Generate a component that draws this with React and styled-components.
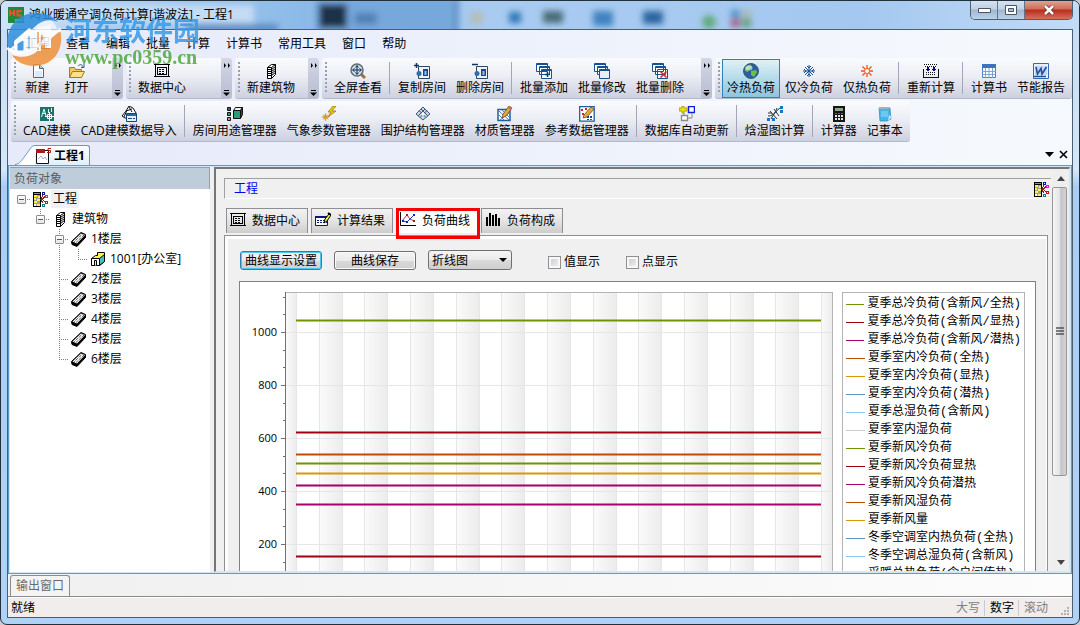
import React, { useState } from "react";
import styled, { createGlobalStyle, css } from "styled-components";

const GlobalStyle = createGlobalStyle`
  * {
    box-sizing: border-box;
  }
  body {
    margin: 0;
    background: #c9cdd2;
    color: #000;
    font-family: "Open Sans", "Noto Sans CJK SC", sans-serif;
    font-size: 12px;
    line-height: 16px;
  }
  button,
  select,
  input {
    font: inherit;
    color: inherit;
    margin: 0;
  }
  svg {
    display: block;
    flex: none;
  }
`;

const icons = {
  newFile: (
    <>
      <path d="M3.500 1.500h6l4 4v9h-10z" fill="#fff" stroke="#4f6a88" />
      <path d="M5 8h7v6H5z" fill="#dbe8f8" />
      <path d="M9.500 1.500v4h4" fill="#b7cde4" stroke="#4f6a88" />
    </>
  ),
  open: (
    <>
      <path d="M.5 14.500v-10h5l1 2h6v3" fill="#f3c85a" stroke="#a8781a" />
      <path d="M.5 14.500l3-6h12l-3 6z" fill="#ffe08a" stroke="#a8781a" />
      <path d="M9 3c2-2 4-2 5 1M12 4.500h3V1" fill="none" stroke="#3b5c8c" />
    </>
  ),
  table: (
    <g shapeRendering="crispEdges">
      <path d="M0 1h16v1H0zM0 13h16v1H0zM1 2h1v11H1zM14 2h1v11h-1zM3 4h10v1H3zM3 11h10v1H3zM3 4h1v8H3zM12 4h1v8h-1z" fill="#000" />
      <path d="M5 6h6M5 8h6M5 10h6" stroke="#000" strokeDasharray="2 1" transform="translate(0 .5)" />
    </g>
  ),
  building: (
    <>
      <path d="M4.500 4.500l4-3h4v10l-4 4h-4z" fill="#fff" stroke="#000" />
      <path d="M8.500 4.500l4-3M8.500 4.500v11M4.500 4.500h4" stroke="#000" fill="none" />
      <path d="M4 6.500h4.500l4-3M4 8.500h4.500l4-3M4 10.500h4.500l4-3M4 12.500h4.500l4-3" stroke="#000" fill="none" />
    </>
  ),
  zoomAll: (
    <>
      <path d="M11 11l4 4" stroke="#a5703c" strokeWidth="3" />
      <circle cx="7" cy="7" r="6" fill="#d4e0ec" stroke="#5d6a76" strokeWidth="1.5" />
      <path d="M7 3v8M3 7h8M5.500 4.500L7 2.500l1.500 2M5.500 9.500L7 11.500l1.500-2M4.500 5.500L2.500 7l2 1.500M9.500 5.500l2 1.500-2 1.500" stroke="#0d2c50" fill="none" />
    </>
  ),
  copyRoom: (
    <>
      <path d="M4.500 3.500h11v12h-11z" fill="#eef3f8" stroke="#2e4560" />
      <path d="M9 6h5v7H9z" fill="#16498a" />
      <path d="M10.500 8h2v4h-2z" fill="#8fc1f2" />
      <circle cx="5" cy="10.500" r="2.500" fill="#2c6dad" />
      <path d="M2.500 0v5M0 2.500h5" stroke="#16365f" strokeWidth="1.500" />
    </>
  ),
  deleteRoom: (
    <>
      <path d="M4.500 3.500h11v12h-11z" fill="#eef3f8" stroke="#2e4560" />
      <path d="M9 6h5v7H9z" fill="#16498a" />
      <path d="M10.500 8h2v4h-2z" fill="#8fc1f2" />
      <circle cx="5" cy="10.500" r="2.500" fill="#2c6dad" />
      <path d="M0 1.500h6" stroke="#16365f" strokeWidth="1.500" />
    </>
  ),
  batchAdd: (
    <>
      <path d="M.5.500h11v8H.5zM3.500 3.500h10v8h-10zM5.500 6.500h10v9h-10z" fill="#fff" stroke="#17518f" />
      <path d="M.5 1.500h11M3.500 4.500h10M5.500 7.500h10" stroke="#17518f" />
      <path d="M9 11.500h5M11.500 9v5" stroke="#0a3c78" strokeWidth="1.500" />
    </>
  ),
  batchEdit: (
    <>
      <path d="M.5.500h11v8H.5zM3.500 3.500h10v8h-10z" fill="#fff" stroke="#17518f" />
      <path d="M5.500 6.500h10v9h-10z" fill="#e5eef8" stroke="#17518f" />
      <path d="M.5 1.500h11M3.500 4.500h10M5.500 7.500h10" stroke="#17518f" />
    </>
  ),
  batchDelete: (
    <>
      <path d="M.5.500h11v8H.5zM3.500 3.500h10v8h-10zM5.500 6.500h10v9h-10z" fill="#fff" stroke="#17518f" />
      <path d="M.5 1.500h11M3.500 4.500h10" stroke="#17518f" />
      <path d="M8.500 8.500l6 6M14.500 8.500l-6 6" stroke="#d8262c" strokeWidth="1.600" />
    </>
  ),
  globe: (
    <>
      <circle cx="8" cy="8" r="7.500" fill="#2b5f9e" stroke="#3d5878" />
      <path d="M2 5c2-3 5-4 6-3l1 3-3 1-1 3-3-1zM8 8l5-1 1 2-3 5-3-2z" fill="#6cc04a" />
      <ellipse cx="6" cy="5" rx="3.500" ry="2.500" fill="#fff" opacity=".55" />
    </>
  ),
  snow: (
    <path d="M8 2v12M2 8h12M4 4l8 8M12 4l-8 8M6 3l2 2 2-2M6 13l2-2 2 2M3 6l2 2-2 2M13 6l-2 2 2 2" stroke="#174f96" fill="none" />
  ),
  sun: (
    <>
      <circle cx="8" cy="8" r="2.500" fill="#fff" stroke="#e8541a" />
      <path d="M8 2v3M8 11v3M2 8h3M11 8h3M3.500 3.500l2.500 2.500M10 10l2.500 2.500M12.500 3.500L10 6M6 10l-2.500 2.500" stroke="#e8541a" strokeWidth="1.300" />
    </>
  ),
  recalc: (
    <g shapeRendering="crispEdges">
      <path d="M1 1.500h14M3 9.500h10M3 11.500h10" stroke="#111" strokeDasharray="1 1" />
      <path d="M2 3.500h12" stroke="#111" strokeDasharray="1 1" />
      <path d="M.5 6v8.500h15V6" fill="none" stroke="#111" />
      <path d="M4 4h2v3H4zM3 6h4v1H3zM4 7h2v1H4zM10 4h2v3h-2zM9 6h4v1H9zM10 7h2v1h-2z" fill="#0a0a80" />
    </g>
  ),
  sheet: (
    <>
      <path d="M1.500 1.500h13v13h-13z" fill="#fff" stroke="#4a7cc0" />
      <path d="M1 1h14v4H1z" fill="#3c72bf" />
      <path d="M1 8.500h14M1 11.500h14M4.500 5v10M8 5v10M11.500 5v10" stroke="#7ba4d8" />
    </>
  ),
  word: (
    <>
      <path d="M.5.500h15v15H.5z" fill="#e7effa" stroke="#3868ae" />
      <path d="M2 3h12v9H2z" fill="#c3d7f0" />
      <path d="M3 4l1.500 7L8 5.500l1 5.500L13.500 4M1 13.500h12" stroke="#234f9c" strokeWidth="1.600" fill="none" />
    </>
  ),
  cad: (
    <>
      <path d="M1 1h14v14H1z" fill="#19736c" />
      <path d="M2.500 11l2.500-8 2 7M4 7.500h3M9.500 3v4M12.500 2v4" stroke="#e4f6f2" fill="none" />
      <path d="M8.500 8.500h4v4h-4zM10.500 6v9M6 10.500h9" stroke="#fff" fill="none" />
    </>
  ),
  cadImport: (
    <>
      <path d="M1 10l4-5 3-5 4 2 3 5-3 5H4z" fill="#fff" stroke="#111" />
      <path d="M3 11l3-7M5 5l6-2M8 1l3 5" stroke="#111" fill="none" />
      <path d="M5.500 7.500h10v8h-10z" fill="#e7f1fb" stroke="#15457b" />
      <path d="M6 8h9v2H6z" fill="#2569b0" />
      <path d="M7 12.500h4M12 12.500h2" stroke="#15457b" />
    </>
  ),
  roomUse: (
    <>
      <path d="M.5 1.500h3v3h-3z" fill="#2c6ac0" stroke="#111" />
      <path d="M.5 6.500h3v3h-3z" fill="#18a878" stroke="#111" />
      <path d="M.5 11.500h3v3h-3z" fill="#e08a70" stroke="#111" />
      <path d="M6.500 4.500l2-3h7l-2 3z" fill="#e5f7f2" stroke="#111" />
      <path d="M6.500 4.500h7v8h-7z" fill="#299c7d" stroke="#111" />
      <path d="M13.500 4.500l2-3v7l-2 4z" fill="#0d5848" stroke="#111" />
    </>
  ),
  weather: (
    <>
      <path d="M12 0L7 6h3l-3 5 8-6h-4l4-5z" fill="#f6c800" stroke="#8c6a00" strokeWidth=".7" />
      <circle cx="4.500" cy="11" r="2.500" fill="#e8b54a" />
      <path d="M4.500 7v8M.5 11h8M2 8.500l5 5M7 8.500l-5 5" stroke="#c99b3e" strokeWidth=".8" />
    </>
  ),
  structure: (
    <>
      <path d="M8 1l7 7-7 6-7-6z" fill="#c4d8ec" stroke="#475a6e" />
      <path d="M4 4.500l7 7M6 3l7 7M12 4.500l-7 7M10 3L3 10" stroke="#475a6e" />
      <path d="M8 6l2 2-2 2-2-2z" fill="#fff" />
    </>
  ),
  material: (
    <>
      <path d="M1 3.500h12v11H1z" fill="#fff" stroke="#1f5e9f" strokeWidth="1.500" />
      <path d="M2 5l10 9M12 7l-9 7M5 4l7 7M2 9l5 5" stroke="#4b82b8" />
      <path d="M5 12l1-4 6-8 3 2-6 8z" fill="#e3a93b" stroke="#6d4a12" strokeWidth=".8" />
      <path d="M12 0l3 2-1 2-3-2z" fill="#c66" />
    </>
  ),
  reference: (
    <>
      <path d="M.7.700h14.500v14.500H.7z" fill="#fff" stroke="#1f5e9f" strokeWidth="1.300" />
      <path d="M2 3h2v2H2zM6 2h2v2H6zM3 7h2v2H3z" fill="#e02020" />
      <path d="M8 10h2v2H8zM11 10h2v2h-2zM8 13h2v1H8z" fill="#1a3aa0" />
      <path d="M11 13h2v1h-2z" fill="#188030" />
      <path d="M4 12l1-3 7-8 3 2-7 8z" fill="#e3a93b" stroke="#6d4a12" strokeWidth=".8" />
    </>
  ),
  dbUpdate: (
    <>
      <path d="M9.500.500h6v6h-6z" fill="#fff" stroke="#0a20e0" strokeWidth="1.500" />
      <path d="M2.500 9.500h6v5h-6z" fill="#fff" stroke="#8a8a8a" strokeWidth="1.300" />
      <path d="M13 7v5H9M5 9V7" stroke="#8a8a8a" fill="none" />
      <path d="M3 0h2v2h3v3H5v2H3V5H0V2h3z" fill="#f2e200" stroke="#8f8600" strokeWidth=".7" />
    </>
  ),
  psychro: (
    <>
      <path d="M1 10c4 0 7-2 9-8M4 13c2-4 5-8 9-11M3 5l7 8M7 3l5 7M1 7h4" stroke="#333" fill="none" />
      <path d="M13 0h3v3h-3zM13 4h3v3h-3zM0 12h3v3H0zM5 12h3v3H5z" fill="#1a75c8" />
    </>
  ),
  calculator: (
    <g shapeRendering="crispEdges">
      <path d="M2 0h12v16H2z" fill="#161616" />
      <path d="M4 2h8v3H4z" fill="#8fa888" />
      <path d="M4 7h2v1H4zM7 7h2v1H7zM10 7h2v1h-2z" fill="#e02828" />
      <path d="M4 9h2v2H4zM7 9h2v2H7zM10 9h2v2h-2zM4 12h2v2H4zM7 12h2v2H7zM10 12h2v2h-2z" fill="#e8e8e8" />
    </g>
  ),
  notepad: (
    <>
      <path d="M2 2h11l1 11-4 2H3z" fill="#47b4e6" stroke="#2d87b5" strokeWidth=".7" />
      <path d="M2 1h10v2H2z" fill="#dfeef5" />
      <path d="M3 1v2M5 1v2M7 1v2M9 1v2M11 1v2" stroke="#5c7c8c" />
      <path d="M4 5h7v6H4z" fill="#6cc8f0" />
      <path d="M12 9l3 2-4 4z" fill="#bfe4f5" />
    </>
  ),
  project: (
    <g shapeRendering="crispEdges">
      <path d="M0 1h8v15H0z" fill="#000" />
      <path d="M1 2h6v1H1z" fill="#18d838" />
      <path d="M1 4h6v11H1z" fill="#a0a0a0" />
      <path d="M1 4h3v2H1zM5 5h2v2H5zM1 7h2v2H1zM4 8h3v2H4zM1 10h3v2H1zM4 13h3v2H4z" fill="#fff34a" />
      <path d="M1 13h2v2H1z" fill="#fff" />
      <path d="M7 8.500h2l3-3M9 8.500l3 2M8 9l2 3M8 8l2-4" stroke="#902020" fill="none" />
      <path d="M9.500 1.500h2v2h-2z" fill="#fff" stroke="#10108c" />
      <path d="M12.500 4.500h2v2h-2z" fill="#fff" stroke="#e010d8" />
      <path d="M12.500 10.500h2v2h-2z" fill="#fff" stroke="#d81010" />
      <path d="M9.500 13.500h2v2h-2z" fill="#fff" stroke="#0e8080" />
    </g>
  ),
  floor: (
    <>
      <path d="M.5 10.500L10 1.500l4.500 2v3L6 15.500l-5-2z" fill="#000" stroke="#000" />
      <path d="M1.500 10.500L10 2.500l4 1.500-8 8.500z" fill="#fff" />
      <path d="M3.500 10.500l8-7.500M5 11.500l8-7.500" stroke="#000" strokeDasharray="1 1" />
    </>
  ),
  room: (
    <>
      <path d="M1.500 7.500l4-3h2v-3h7v9l-5 4z" fill="#fff34a" stroke="#000" />
      <path d="M9.500 7.500l5-4v7l-5 4z" fill="#3fc4c8" stroke="#000" />
      <path d="M1.500 7.500h8v7h-8z" fill="#fff" stroke="#000" />
      <path d="M4.500 14.500v-5h2v5" fill="#fff34a" stroke="#000" />
    </>
  ),
  results: (
    <>
      <path d="M.5 4.500h12v9H.5z" fill="#fff" stroke="#0b1680" />
      <path d="M0 4h13v2H0z" fill="#0b1680" />
      <path d="M2 8.500h10M2 10.500h10" stroke="#0b1680" strokeDasharray="2 1" />
      <path d="M9 11l1-4 4-5 2 1-4 6z" fill="#fff34a" stroke="#000" />
      <path d="M13 1l3 2" stroke="#000" strokeWidth="2" />
    </>
  ),
  curve: (
    <>
      <path d="M.5 0v13.500H16" fill="none" stroke="#000" />
      <path d="M2 9l5-6 3 4 4 2" fill="none" stroke="#b03040" />
      <path d="M3 9l4 1 7-7" fill="none" stroke="#2038d8" />
      <path d="M2 8h2v2H2zM6 9h2v2H6zM13 2h2v2h-2z" fill="#1020c8" />
      <path d="M6 2h2v2H6zM13 8h2v2h-2z" fill="#a02020" />
    </>
  ),
  bars: (
    <path d="M1 5h2v9H1zM4 1h2v13H4zM7 3h2v11H7zM10 2h2v12h-2zM13 6h2v8h-2z" fill="#000" shapeRendering="crispEdges" />
  ),
  doc: (
    <>
      <path d="M1.500 2.500h12v13h-12z" fill="#fff" stroke="#111" />
      <path d="M1 1h9v4H1z" fill="#a51c1c" />
      <path d="M3 11l3-3 2 3 2-2 2 3" stroke="#aac" fill="none" />
      <path d="M16 .500h-3v2h2.500v2H12" stroke="#a51c1c" fill="none" />
    </>
  ),
};

const Icon = ({ name }) => (
  <svg width="16" height="16" viewBox="0 0 16 16" aria-hidden="true">
    {icons[name]}
  </svg>
);

const mainToolbar = [
  { more: true, items: [["newFile", "新建"], ["open", "打开"]], room: 16 },
  { more: true, items: [["table", "数据中心"]], room: 30 },
  { more: true, items: [["building", "新建筑物"]], room: 8 },
  {
    more: true,
    room: 12,
    items: [
      ["zoomAll", "全屏查看"],
      null,
      ["copyRoom", "复制房间"],
      ["deleteRoom", "删除房间"],
      null,
      ["batchAdd", "批量添加"],
      ["batchEdit", "批量修改"],
      ["batchDelete", "批量删除"],
    ],
  },
  {
    items: [
      ["globe", "冷热负荷"],
      ["snow", "仅冷负荷"],
      ["sun", "仅热负荷"],
      null,
      ["recalc", "重新计算"],
      null,
      ["sheet", "计算书"],
      ["word", "节能报告"],
    ],
  },
];

const toolsToolbar = [
  {
    items: [
      ["cad", "CAD建模"],
      ["cadImport", "CAD建模数据导入"],
      null,
      ["roomUse", "房间用途管理器"],
      ["weather", "气象参数管理器"],
      ["structure", "围护结构管理器"],
      ["material", "材质管理器"],
      ["reference", "参考数据管理器"],
      null,
      ["dbUpdate", "数据库自动更新"],
      null,
      ["psychro", "焓湿图计算"],
      null,
      ["calculator", "计算器"],
      ["notepad", "记事本"],
    ],
  },
];

const menus = ["工程", "查看", "编辑", "批量", "计算", "计算书", "常用工具", "窗口", "帮助"];

// cells: "box" expander, "v" line passing by, "t" branch, "l" last branch, "" blank
const tree = [
  { cells: ["box"], icon: "project", label: "工程", selected: true },
  { cells: ["", "boxUp"], icon: "building", label: "建筑物" },
  { cells: ["", "", "boxBoth"], icon: "floor", label: "1楼层" },
  { cells: ["", "", "v", "l"], icon: "room", label: "1001[办公室]" },
  { cells: ["", "", "t"], icon: "floor", label: "2楼层" },
  { cells: ["", "", "t"], icon: "floor", label: "3楼层" },
  { cells: ["", "", "t"], icon: "floor", label: "4楼层" },
  { cells: ["", "", "t"], icon: "floor", label: "5楼层" },
  { cells: ["", "", "l"], icon: "floor", label: "6楼层" },
];

const pageTabs = [
  ["table", "数据中心"],
  ["results", "计算结果"],
  ["curve", "负荷曲线"],
  ["bars", "负荷构成"],
];

const GREEN = "#6f9400";
const RED = "#a00010";
const MAGENTA = "#a80068";
const ORANGE = "#c04c00";
const AMBER = "#dc9608";
const BLUE = "#5a94c8";
const SKY = "#8cc6f4";
const GREY = "#cccccc";

const legend = [
  [GREEN, "夏季总冷负荷(含新风/全热)"],
  [RED, "夏季总冷负荷(含新风/显热)"],
  [MAGENTA, "夏季总冷负荷(含新风/潜热)"],
  [ORANGE, "夏季室内冷负荷(全热)"],
  [AMBER, "夏季室内冷负荷(显热)"],
  [BLUE, "夏季室内冷负荷(潜热)"],
  [SKY, "夏季总湿负荷(含新风)"],
  [GREY, "夏季室内湿负荷"],
  [GREEN, "夏季新风冷负荷"],
  [RED, "夏季新风冷负荷显热"],
  [MAGENTA, "夏季新风冷负荷潜热"],
  [ORANGE, "夏季新风湿负荷"],
  [AMBER, "夏季新风量"],
  [BLUE, "冬季空调室内热负荷(全热)"],
  [SKY, "冬季空调总湿负荷(含新风)"],
  [GREY, "采暖总热负荷(含户间传热)"],
];

const series = [
  [1045, GREEN],
  [623, RED],
  [540, ORANGE],
  [506, GREEN],
  [468, AMBER],
  [423, MAGENTA],
  [351, MAGENTA],
  [155, RED],
];

const PLOT = { left: 46, right: 592, top: 10, first: 56, last: 581, bottom: 310 };
const yOf = (value) => Math.round(50 + ((1000 - value) * 53) / 200);
const xOf = (hour) => Math.round(PLOT.first + (hour * (PLOT.last - PLOT.first)) / 23);

const Chart = () => {
  const hours = Array.from({ length: 24 }, (_, i) => i);
  const bands = [[PLOT.left, PLOT.first]];
  for (let h = 1; h < 23; h += 2) bands.push([xOf(h), xOf(h + 1)]);
  bands.push([PLOT.last, PLOT.right]);
  const minors = Array.from({ length: 17 }, (_, i) => 1133 - i * 66.667);

  return (
    <ChartSvg viewBox="0 0 593 330" preserveAspectRatio="xMinYMin meet" shapeRendering="crispEdges">
      <defs>
        <linearGradient id="band">
          <stop offset="0" stopColor="#fbfbfb" />
          <stop offset="1" stopColor="#ececec" />
        </linearGradient>
      </defs>
      {bands.map(([a, b]) => (
        <rect key={a} x={a} y={PLOT.top} width={b - a} height={PLOT.bottom} fill="url(#band)" />
      ))}
      {hours.map((h) => (
        <rect key={h} x={xOf(h)} y={PLOT.top} width="1" height={PLOT.bottom} fill="#e6e6e6" />
      ))}
      {[1000, 800, 600, 400, 200].map((v) => (
        <g key={v}>
          <rect x={PLOT.left} y={yOf(v)} width={PLOT.right - PLOT.left} height="1" fill="#e6e6e6" />
          <rect x={PLOT.left - 5} y={yOf(v)} width="5" height="1" fill="#707070" />
          <text x="37" y={yOf(v) + 4} textAnchor="end">
            {v}
          </text>
        </g>
      ))}
      {minors.map((v) => (
        <rect key={v} x={PLOT.left - 3} y={yOf(v)} width="3" height="1" fill="#707070" />
      ))}
      <rect x={PLOT.left} y={PLOT.top} width={PLOT.right - PLOT.left} height="1" fill="#b4b4b4" />
      <rect x={PLOT.right} y={PLOT.top} width="1" height={PLOT.bottom} fill="#b4b4b4" />
      <rect x={PLOT.left - 1} y={PLOT.top} width="1" height={PLOT.bottom} fill="#707070" />
      {series.map(([v, color]) => (
        <g key={v} fill={color}>
          <rect x={PLOT.first} y={yOf(v) - 1} width={PLOT.last - PLOT.first} height="3" opacity="0.5" />
          <rect x={PLOT.first} y={yOf(v)} width={PLOT.last - PLOT.first} height="1" />
        </g>
      ))}
    </ChartSvg>
  );
};

const Backdrop = () => (
  <BackdropSvg viewBox="0 0 1078 28" preserveAspectRatio="xMinYMin slice" aria-hidden="true">
    <defs>
      <filter id="soft" x="-20%" y="-50%" width="140%" height="200%">
        <feGaussianBlur stdDeviation="3" />
      </filter>
      <linearGradient id="glass">
        <stop offset="0" stopColor="#cfe3f8" />
        <stop offset=".1" stopColor="#a9cdf0" />
        <stop offset=".28" stopColor="#8cbae8" />
        <stop offset=".45" stopColor="#a9cbf1" />
        <stop offset=".8" stopColor="#a5c8f0" />
        <stop offset="1" stopColor="#c2dbf6" />
      </linearGradient>
    </defs>
    <rect width="1078" height="28" fill="url(#glass)" />
    <g filter="url(#soft)">
      <rect x="28" y="4" width="225" height="18" fill="#c4dcf4" />
      <rect x="185" y="23" width="92" height="8" fill="#5a8cc0" />
      <rect x="314" y="-4" width="142" height="38" fill="#76a8dc" />
      <rect x="318" y="3" width="28" height="24" fill="#1c3148" />
      <rect x="354" y="12" width="22" height="11" fill="#426e9e" opacity=".7" />
      <rect x="454" y="-4" width="3" height="38" fill="#3f74ae" />
      <circle cx="476" cy="17" r="7" fill="#b9b9a0" opacity=".7" />
      <rect x="508" y="11" width="12" height="11" fill="#2f78b8" />
      <rect x="542" y="10" width="20" height="12" fill="#4a6c78" />
      <rect x="592" y="10" width="20" height="15" fill="#3f83bf" />
      <rect x="642" y="10" width="20" height="13" fill="#2b659f" />
      <circle cx="708" cy="21" r="7" fill="#62ab7b" />
      <rect x="730" y="9" width="9" height="8" fill="#4a90c8" />
      <rect x="730" y="18" width="9" height="8" fill="#a85a7a" />
      <rect x="741" y="9" width="9" height="8" fill="#a9b8b0" />
      <rect x="741" y="18" width="9" height="8" fill="#5b9c70" />
    </g>
  </BackdropSvg>
);

const Toolbar = ({ groups, active, onPick }) => (
  <ToolbarRow>
    {groups.map((group, i) => (
      <ToolGroup key={i} role="toolbar">
        <Grip />
        {group.items.map((item, n) =>
          item ? (
            <ToolButton key={item[1]} $active={active === item[1]} onClick={() => onPick(item[1])}>
              <Icon name={item[0]} />
              {item[1]}
            </ToolButton>
          ) : (
            <ToolSeparator key={n} />
          )
        )}
        {group.more && (
          <MoreButton aria-label="更多" $room={group.room}>
            <svg width="8" height="5" viewBox="0 0 8 5">
              <path d="M1 0l2 2.500-2 2.500zM5 0l2 2.500-2 2.500z" />
            </svg>
            <svg width="7" height="6" viewBox="0 0 7 6">
              <path d="M1 0h5v1H1zM0 2.500h7L3.500 6z" />
            </svg>
          </MoreButton>
        )}
      </ToolGroup>
    ))}
  </ToolbarRow>
);

const App = () => {
  const [mode, setMode] = useState("冷热负荷");
  const [tab, setTab] = useState("负荷曲线");

  return (
    <>
      <GlobalStyle />
      <Window>
        <TitleBar>
          <Backdrop />
          <TitleText>
            <svg width="16" height="16" viewBox="0 0 16 16" aria-hidden="true">
              <path d="M0 0h16v16H0z" fill="#1d8a3c" />
              <path d="M2 3v6M6 3v6M2 6h4M14 4H9.500v4.500H14" stroke="#f0502c" strokeWidth="2" fill="none" />
              <path d="M7 13h7" stroke="#ace2a8" />
            </svg>
            鸿业暖通空调负荷计算[谐波法] - 工程1
          </TitleText>
          <WindowButtons>
            <WindowButton aria-label="最小化">
              <svg width="13" height="6" viewBox="0 0 13 6">
                <path d="M.5 1.500h12v4H.5z" fill="#fff" stroke="#4b5566" />
              </svg>
            </WindowButton>
            <WindowButton aria-label="最大化">
              <svg width="12" height="10" viewBox="0 0 12 10">
                <path d="M.5.500h11v9H.5z" fill="#fff" stroke="#4b5566" />
                <path d="M3.500 3.500h5v3h-5z" fill="#a9bfd8" stroke="#4b5566" />
              </svg>
            </WindowButton>
            <WindowButton aria-label="关闭" $close>
              <svg width="12" height="10" viewBox="0 0 12 10">
                <path d="M2 1l8 8M10 1L2 9" stroke="#5a2a2a" strokeWidth="4" />
                <path d="M2 1l8 8M10 1L2 9" stroke="#fff" strokeWidth="2.500" />
              </svg>
            </WindowButton>
          </WindowButtons>
        </TitleBar>

        <Client>
          <MenuBar>
            <Grip $menu />
            {menus.map((m) => (
              <MenuButton key={m}>{m}</MenuButton>
            ))}
          </MenuBar>
          <Toolbar groups={mainToolbar} active={mode} onPick={setMode} />
          <Toolbar groups={toolsToolbar} onPick={() => {}} />

          <DocTabs>
            <svg width="20" height="20" viewBox="0 0 20 20" aria-hidden="true">
              <path d="M0 20C5 19 6 16 10 11S16 1 20 1v19z" fill="#fff" />
              <path d="M0 19.500C5 19 6 16 10 11S16 .5 20 .5" fill="none" stroke="#5f9cc8" />
            </svg>
            <DocTab>
              <Icon name="doc" />
              工程1
            </DocTab>
            <DocActions>
              <IconButton aria-label="窗口列表">
                <svg width="9" height="5" viewBox="0 0 9 5">
                  <path d="M0 0h9L4.500 5z" />
                </svg>
              </IconButton>
              <IconButton aria-label="关闭文档">
                <svg width="9" height="9" viewBox="0 0 9 9">
                  <path d="M1 1l7 7M8 1L1 8" stroke="#000" strokeWidth="1.600" />
                </svg>
              </IconButton>
            </DocActions>
          </DocTabs>

          <Workspace>
            <SidePanel>
              <SideTitle>负荷对象</SideTitle>
              <Tree>
                {tree.map((node) => (
                  <TreeRow key={node.label}>
                    {node.cells.map((kind, i) =>
                      kind.startsWith("box") ? (
                        <TreeCell key={i} $kind={kind}>
                          <Expander aria-label="折叠" />
                        </TreeCell>
                      ) : (
                        <TreeCell key={i} $kind={kind} />
                      )
                    )}
                    <Icon name={node.icon} />
                    <TreeLabel $selected={node.selected}>{node.label}</TreeLabel>
                  </TreeRow>
                ))}
              </Tree>
            </SidePanel>

            <Main>
              <Page>
                <PageHeader>
                  工程
                  <Icon name="project" />
                </PageHeader>
                <PageTabs role="tablist">
                  {pageTabs.map(([icon, label]) => (
                    <PageTab key={label} role="tab" aria-selected={tab === label} $active={tab === label} onClick={() => setTab(label)}>
                      <Icon name={icon} />
                      {label}
                    </PageTab>
                  ))}
                </PageTabs>
                <TabPanel>
                  <Controls>
                    <PushButton $focused>曲线显示设置</PushButton>
                    <PushButton>曲线保存</PushButton>
                    <SelectBox>
                      <select aria-label="图表类型" defaultValue="line">
                        <option value="line">折线图</option>
                      </select>
                      <svg width="8" height="4" viewBox="0 0 8 4" aria-hidden="true">
                        <path d="M0 0h8L4 4z" />
                      </svg>
                    </SelectBox>
                    <Checks>
                      <CheckLabel>
                        <input type="checkbox" />
                        值显示
                      </CheckLabel>
                      <CheckLabel>
                        <input type="checkbox" />
                        点显示
                      </CheckLabel>
                    </Checks>
                  </Controls>
                  <ChartFrame>
                    <Chart />
                    <Legend>
                      {legend.map(([color, label]) => (
                        <LegendItem key={label} $color={color}>
                          {label}
                        </LegendItem>
                      ))}
                    </Legend>
                  </ChartFrame>
                </TabPanel>
              </Page>
              <ScrollBar>
                <ScrollButton aria-label="向上滚动">
                  <svg width="8" height="5" viewBox="0 0 8 5">
                    <path d="M0 5h8L4 0z" fill="#444" />
                  </svg>
                </ScrollButton>
                <ScrollTrack>
                  <ScrollThumb>
                    <svg width="8" height="9" viewBox="0 0 8 9">
                      <path d="M0 1h8M0 4h8M0 7h8" stroke="#555" strokeWidth="1.500" />
                    </svg>
                  </ScrollThumb>
                </ScrollTrack>
                <ScrollButton aria-label="向下滚动">
                  <svg width="8" height="5" viewBox="0 0 8 5">
                    <path d="M0 0h8L4 5z" fill="#444" />
                  </svg>
                </ScrollButton>
              </ScrollBar>
            </Main>
          </Workspace>

          <OutputBar>
            <OutputTab>输出窗口</OutputTab>
          </OutputBar>
          <StatusBar>
            <StatusText>就绪</StatusText>
            <StatusCell>大写</StatusCell>
            <StatusCell $on>数字</StatusCell>
            <StatusCell $last>滚动</StatusCell>
            <svg width="10" height="10" viewBox="0 0 10 10" aria-hidden="true">
              <path d="M7 1h2v2H7zM4 4h2v2H4zM7 4h2v2H7zM1 7h2v2H1zM4 7h2v2H4zM7 7h2v2H7z" fill="#b4b0ae" />
            </svg>
          </StatusBar>
        </Client>

        <Watermark>
          <svg width="58" height="58" viewBox="0 0 58 58" aria-hidden="true">
            <circle cx="29" cy="30" r="26" fill="#fff" opacity=".75" />
            <path d="M2 32C3 15 14 3 31 3c10 0 17 3 22 9-8-3-14-2-20 2L6 38c-3 2-4-3-4-6z" fill="#2f8fdc" />
            <path d="M56 24c2 18-9 32-27 32-9 0-18-4-22-11 9 3 17 2 23-2l19-17c4-3 6-6 7-2z" fill="#f09038" />
            <path d="M9 31l15-13 5 3v19h-6V27l-8 6v7H9z" fill="#fff" />
            <path d="M13 34v6h5v-9zM24 26v14" fill="#2f8fdc" stroke="#2f8fdc" />
            <path d="M30 19l16-5v24h-6V22l-4 1v18h-6z" fill="#fff" />
            <path d="M37 25v15M33 22v18" stroke="#f09038" strokeWidth="1.500" />
            <path d="M2 38c9 8 22 5 32-3 7-6 13-11 22-16" fill="none" stroke="#fff" strokeWidth="3" />
          </svg>
          <div>
            <MarkName>河东软件园</MarkName>
            <MarkSite>www.pc0359.cn</MarkSite>
          </div>
        </Watermark>
      </Window>
    </>
  );
};

const Window = styled.div`
  position: relative;
  display: flex;
  flex-direction: column;
  height: 100vh;
  padding: 0 6px 6px;
  border: 1px solid #20303c;
  border-radius: 7px;
  overflow: hidden;
  background: linear-gradient(180deg, #c6dcf4 0, #d4e6f8 170px, #a9cdf4 185px, #b0d2f6 100%);
`;

const TitleBar = styled.header`
  display: flex;
  flex: none;
  align-items: flex-start;
  justify-content: space-between;
  height: 28px;
  padding-left: 1px;
`;

const BackdropSvg = styled.svg`
  position: absolute;
  top: 0;
  left: 0;
  width: 100%;
  height: 28px;
`;

const TitleText = styled.div`
  position: relative;
  display: flex;
  align-items: center;
  gap: 5px;
  height: 28px;
`;

const WindowButtons = styled.div`
  position: relative;
  display: flex;
  border: 1px solid #4d5f75;
  border-top: 0;
  border-radius: 0 0 5px 5px;
  overflow: hidden;
`;

const WindowButton = styled.button`
  display: flex;
  align-items: center;
  justify-content: center;
  width: ${(p) => (p.$close ? 47 : 27)}px;
  height: 18px;
  padding: 0;
  border: 0;
  border-right: ${(p) => (p.$close ? "0" : "1px solid #62748a")};
  background: ${(p) =>
    p.$close
      ? "linear-gradient(#e3a193, #cf6a58 45%, #b92d1a 50%, #d4705c)"
      : "linear-gradient(#d5e2f0, #c0d1e4 45%, #9fb7d1 50%, #bdd2e8)"};
`;

const Client = styled.main`
  display: flex;
  flex: 1;
  flex-direction: column;
  min-height: 0;
  border: 1px solid #4a6070;
  background: linear-gradient(90deg, #e6eafa, #f6f9fd);
`;

const MenuBar = styled.nav`
  display: flex;
  flex: none;
  align-items: center;
  height: 28px;
  padding-left: 2px;
`;

const MenuButton = styled.button`
  padding: 0 8px;
  border: 0;
  background: none;
`;

const Grip = styled.span`
  flex: none;
  width: ${(p) => (p.$menu ? 8 : 7)}px;
  height: ${(p) => (p.$menu ? 16 : 32)}px;
  margin-top: ${(p) => (p.$menu ? 0 : 3)}px;
  background: repeating-linear-gradient(180deg, #9a9eb4 0 2px, transparent 2px 4px) 3px 0 / 2px 100% no-repeat;
`;

const ToolbarRow = styled.div`
  display: flex;
  flex: none;
  gap: 3px;
  height: 41px;
  margin-bottom: 2px;
  padding-left: 3px;
`;

const ToolGroup = styled.div`
  display: flex;
  padding-top: 1px;
  border-bottom: 1px solid #b4b8cb;
  border-radius: 3px;
  overflow: hidden;
  background: linear-gradient(#fafbfe, #eceef5 45%, #cdd0df);
  &:last-child {
    padding-right: 2px;
  }
`;

const ToolButton = styled.button`
  display: flex;
  flex: none;
  flex-direction: column;
  align-items: center;
  gap: 1px;
  min-width: 39px;
  height: 39px;
  padding: 3px 4px 0;
  border: 1px solid transparent;
  background: none;
  white-space: nowrap;
  ${(p) =>
    p.$active &&
    css`
      border-color: #2b83b4;
      background: linear-gradient(#e0f1f7, #b4dbea 50%, #8dc6de);
    `}
`;

const ToolSeparator = styled.span`
  flex: none;
  width: 1px;
  height: 32px;
  margin: 3px 3px 0 2px;
  background: #a3a6ba;
`;

const MoreButton = styled.button`
  display: flex;
  flex: none;
  flex-direction: column;
  align-items: center;
  justify-content: space-between;
  width: 11px;
  height: 41px;
  margin: -1px 0 0 ${(p) => p.$room}px;
  padding: 5px 0 3px;
  border: 0;
  background: linear-gradient(#d3d7e6, #b6bccf);
`;

const DocTabs = styled.div`
  display: flex;
  flex: none;
  align-items: flex-end;
  height: 21px;
  padding: 0 4px 0 7px;
`;

const DocTab = styled.div`
  display: flex;
  align-items: center;
  gap: 3px;
  height: 20px;
  padding: 0 4px 0 0;
  border-top: 1px solid #5f9cc8;
  border-right: 1px solid #5f9cc8;
  border-radius: 0 3px 0 0;
  background: linear-gradient(#fff, #e0effc);
  font-weight: bold;
`;

const DocActions = styled.div`
  display: flex;
  align-items: center;
  gap: 5px;
  height: 21px;
  margin-left: auto;
`;

const IconButton = styled.button`
  padding: 0;
  border: 0;
  background: none;
`;

const Workspace = styled.section`
  display: flex;
  flex: 1;
  gap: 4px;
  min-height: 0;
  border: 1px solid #5f9cc8;
  box-shadow: inset 0 0 0 1px #cfe5f8;
  padding: 1px;
  background: #f0f0f0;
`;

const SidePanel = styled.aside`
  flex: none;
  width: 200px;
  background: #fff;
`;

const SideTitle = styled.h2`
  height: 22px;
  margin: 0;
  padding-left: 4px;
  border-top: 1px solid #989ea4;
  border-right: 1px solid #989ea4;
  background: #bfcdda;
  color: #555c63;
  font-size: 12px;
  font-weight: normal;
  line-height: 22px;
`;

const Tree = styled.div`
  padding-left: 2px;
`;

const TreeRow = styled.div`
  display: flex;
  align-items: center;
  height: 20px;
`;

const dotsV = "repeating-linear-gradient(180deg, #808080 0 1px, transparent 1px 2px)";
const dotsH = "repeating-linear-gradient(90deg, #808080 0 1px, transparent 1px 2px)";
const cellLines = {
  box: `${dotsH} 9px 10px / 10px 1px no-repeat`,
  boxUp: `${dotsH} 9px 10px / 10px 1px no-repeat, ${dotsV} 9px 0 / 1px 10px no-repeat`,
  boxBoth: `${dotsH} 9px 10px / 10px 1px no-repeat, ${dotsV} 9px 0 / 1px 20px no-repeat`,
  v: `${dotsV} 9px 0 / 1px 20px no-repeat`,
  t: `${dotsH} 9px 10px / 10px 1px no-repeat, ${dotsV} 9px 0 / 1px 20px no-repeat`,
  l: `${dotsH} 9px 10px / 10px 1px no-repeat, ${dotsV} 9px 0 / 1px 10px no-repeat`,
};

const TreeCell = styled.span`
  display: flex;
  flex: none;
  align-items: center;
  width: 19px;
  height: 20px;
  padding-left: 5px;
  background: ${(p) => cellLines[p.$kind] || "none"};
  & + svg {
    margin-left: 2px;
  }
`;

const Expander = styled.button`
  width: 9px;
  height: 9px;
  padding: 0;
  border: 1px solid #8c8c8c;
  border-radius: 1px;
  background: linear-gradient(#3c5aa0, #3c5aa0) 1px 3px / 5px 1px no-repeat, linear-gradient(#fff, #e4e4e4);
`;

const TreeLabel = styled.span`
  margin-left: 2px;
  padding: 1px 2px;
  background: ${(p) => (p.$selected ? "#f0f0f0" : "none")};
  white-space: nowrap;
`;

const Main = styled.div`
  display: flex;
  flex: 1;
  min-width: 0;
  overflow: hidden;
  border: 1px solid #e3e3e3;
  border-top: 2px solid #77757a;
  border-left: 2px solid #77757a;
  background: #f0f0f0;
`;

const Page = styled.div`
  flex: 1;
  min-width: 0;
  overflow: hidden;
  padding: 9px 0 0 8px;
`;

const PageHeader = styled.h1`
  display: flex;
  align-items: center;
  justify-content: space-between;
  height: 21px;
  margin: 0 1px 9px 0;
  padding: 0 1px 0 9px;
  border-top: 1px solid #a0a0a0;
  border-left: 1px solid #a0a0a0;
  border-bottom: 1px solid #fff;
  color: #0000f0;
  font-size: 12px;
  font-weight: normal;
`;

const PageTabs = styled.div`
  display: flex;
  gap: 3px;
  padding: 0 0 2px 2px;
`;

const PageTab = styled.button`
  position: relative;
  display: flex;
  gap: 6px;
  width: 82px;
  height: 25px;
  padding: 3px 0 0 3px;
  border: 1px solid #8e8e94;
  border-bottom: 0;
  background: ${(p) => (p.$active ? "#fff" : "linear-gradient(#f2f2f2, #e4e4e4 50%, #cdcdcd)")};
  line-height: 18px;
  white-space: nowrap;
  ${(p) =>
    p.$active &&
    css`
      &::after {
        content: "";
        position: absolute;
        inset: -1px -3px -6px -1px;
        border: 3px solid #f80000;
      }
    `}
`;

const TabPanel = styled.div`
  margin-right: 4px;
  padding: 14px 11px 0 14px;
  border: 1px solid #8e8e94;
  box-shadow: inset 3px 3px 0 #fff, inset -1px 0 0 #fff;
`;

const Controls = styled.div`
  display: flex;
  align-items: center;
  gap: 12px;
  height: 20px;
  margin-bottom: 11px;
  padding-left: 1px;
`;

const PushButton = styled.button`
  width: 82px;
  height: 19px;
  padding: 0;
  border: 1px solid ${(p) => (p.$focused ? "#2c7fb0" : "#707070")};
  border-radius: 3px;
  box-shadow: ${(p) => (p.$focused ? "inset 0 0 0 1px #48c8f0" : "inset 0 0 0 1px #fafafa")};
  background: linear-gradient(#f4f4f4, #ebebeb 50%, #dadada 51%, #cfcfcf);
  line-height: 17px;
  white-space: nowrap;
`;

const SelectBox = styled.div`
  display: flex;
  align-items: center;
  select {
    width: 84px;
    height: 20px;
    padding: 1px 16px 0 3px;
    border: 1px solid #707070;
    border-radius: 3px;
    appearance: none;
    background: linear-gradient(#f4f4f4, #ebebeb 50%, #dadada 51%, #cfcfcf);
  }
  svg {
    margin-left: -13px;
    margin-right: 5px;
    pointer-events: none;
  }
`;

const Checks = styled.div`
  display: flex;
  gap: 26px;
  margin: 4px 0 0 24px;
`;

const CheckLabel = styled.label`
  display: flex;
  align-items: center;
  gap: 3px;
  input {
    width: 13px;
    height: 13px;
    border: 1px solid #8e8f8f;
    outline: 2px solid #f8f8f8;
    outline-offset: -3px;
    appearance: none;
    background: linear-gradient(135deg, #c4c8ce, #f4f4f4);
  }
  input:checked {
    background: #4a78b0;
  }
`;

const ChartFrame = styled.div`
  display: flex;
  align-items: flex-start;
  gap: 9px;
  padding-right: 10px;
  border: 1px solid #808080;
  background: #fff;
`;

const ChartSvg = styled.svg`
  flex: 1;
  min-width: 0;
  height: 330px;
  text {
    font-family: "Open Sans", sans-serif;
    font-size: 11px;
  }
`;

const Legend = styled.ul`
  flex: none;
  width: 183px;
  margin: 10px 0;
  padding: 2px 3px;
  border: 1px solid #b4b4b4;
  list-style: none;
  font-family: "Liberation Mono", "Noto Sans CJK SC", monospace;
`;

const LegendItem = styled.li`
  display: flex;
  align-items: center;
  gap: 3px;
  height: 18px;
  line-height: 18px;
  white-space: nowrap;
  &::before {
    content: "";
    width: 19px;
    height: 1px;
    background: ${(p) => p.$color};
  }
`;

const ScrollBar = styled.div`
  display: flex;
  flex: none;
  flex-direction: column;
  width: 17px;
  background: #eeeeef;
`;

const ScrollButton = styled.button`
  display: flex;
  flex: none;
  align-items: center;
  justify-content: center;
  height: 18px;
  padding: 0;
  border: 0;
  background: none;
`;

const ScrollTrack = styled.div`
  flex: 1;
`;

const ScrollThumb = styled.div`
  display: flex;
  align-items: center;
  justify-content: center;
  width: 15px;
  height: 79%;
  border: 1px solid #979797;
  border-radius: 2px;
  background: linear-gradient(90deg, #f5f5f5, #e4e4e6 50%, #c4c4c8 60%, #d4d4d8);
`;

const OutputBar = styled.div`
  display: flex;
  flex: none;
  align-items: flex-end;
  height: 23px;
  padding-left: 2px;
  border-bottom: 1px solid #8c8c8c;
  background: linear-gradient(90deg, #f0f0f0, #fcfcfc);
`;

const OutputTab = styled.button`
  height: 21px;
  padding: 0 5px;
  border: 1px solid #8c8c8c;
  border-bottom: 0;
  border-radius: 3px 3px 0 0;
  background: #f4f4f4;
  color: #6a6a6a;
`;

const StatusBar = styled.footer`
  display: flex;
  flex: none;
  align-items: center;
  height: 20px;
  padding: 0 2px 0 3px;
  border-top: 1px solid #fff;
  background: #f1edec;
`;

const StatusText = styled.span`
  flex: 1;
`;

const StatusCell = styled.span`
  padding: 0 4px 0 5px;
  border-right: ${(p) => (p.$last ? 0 : 1)}px solid #cfcac8;
  color: ${(p) => (p.$on ? "#000" : "#808080")};
  & + svg {
    margin: 6px 0 0 8px;
  }
`;

const Watermark = styled.div`
  position: absolute;
  top: 9px;
  left: 4px;
  display: flex;
  gap: 2px;
  pointer-events: none;
  opacity: 0.85;
`;

const MarkName = styled.div`
  margin-top: 5px;
  color: #3a9ae4;
  font-family: "Noto Sans CJK SC", sans-serif;
  font-size: 27px;
  font-weight: bold;
  line-height: 30px;
`;

const MarkSite = styled.div`
  color: #4ea83c;
  font-family: "Liberation Serif", serif;
  font-size: 20px;
  font-weight: bold;
  line-height: 24px;
`;

export default App;
